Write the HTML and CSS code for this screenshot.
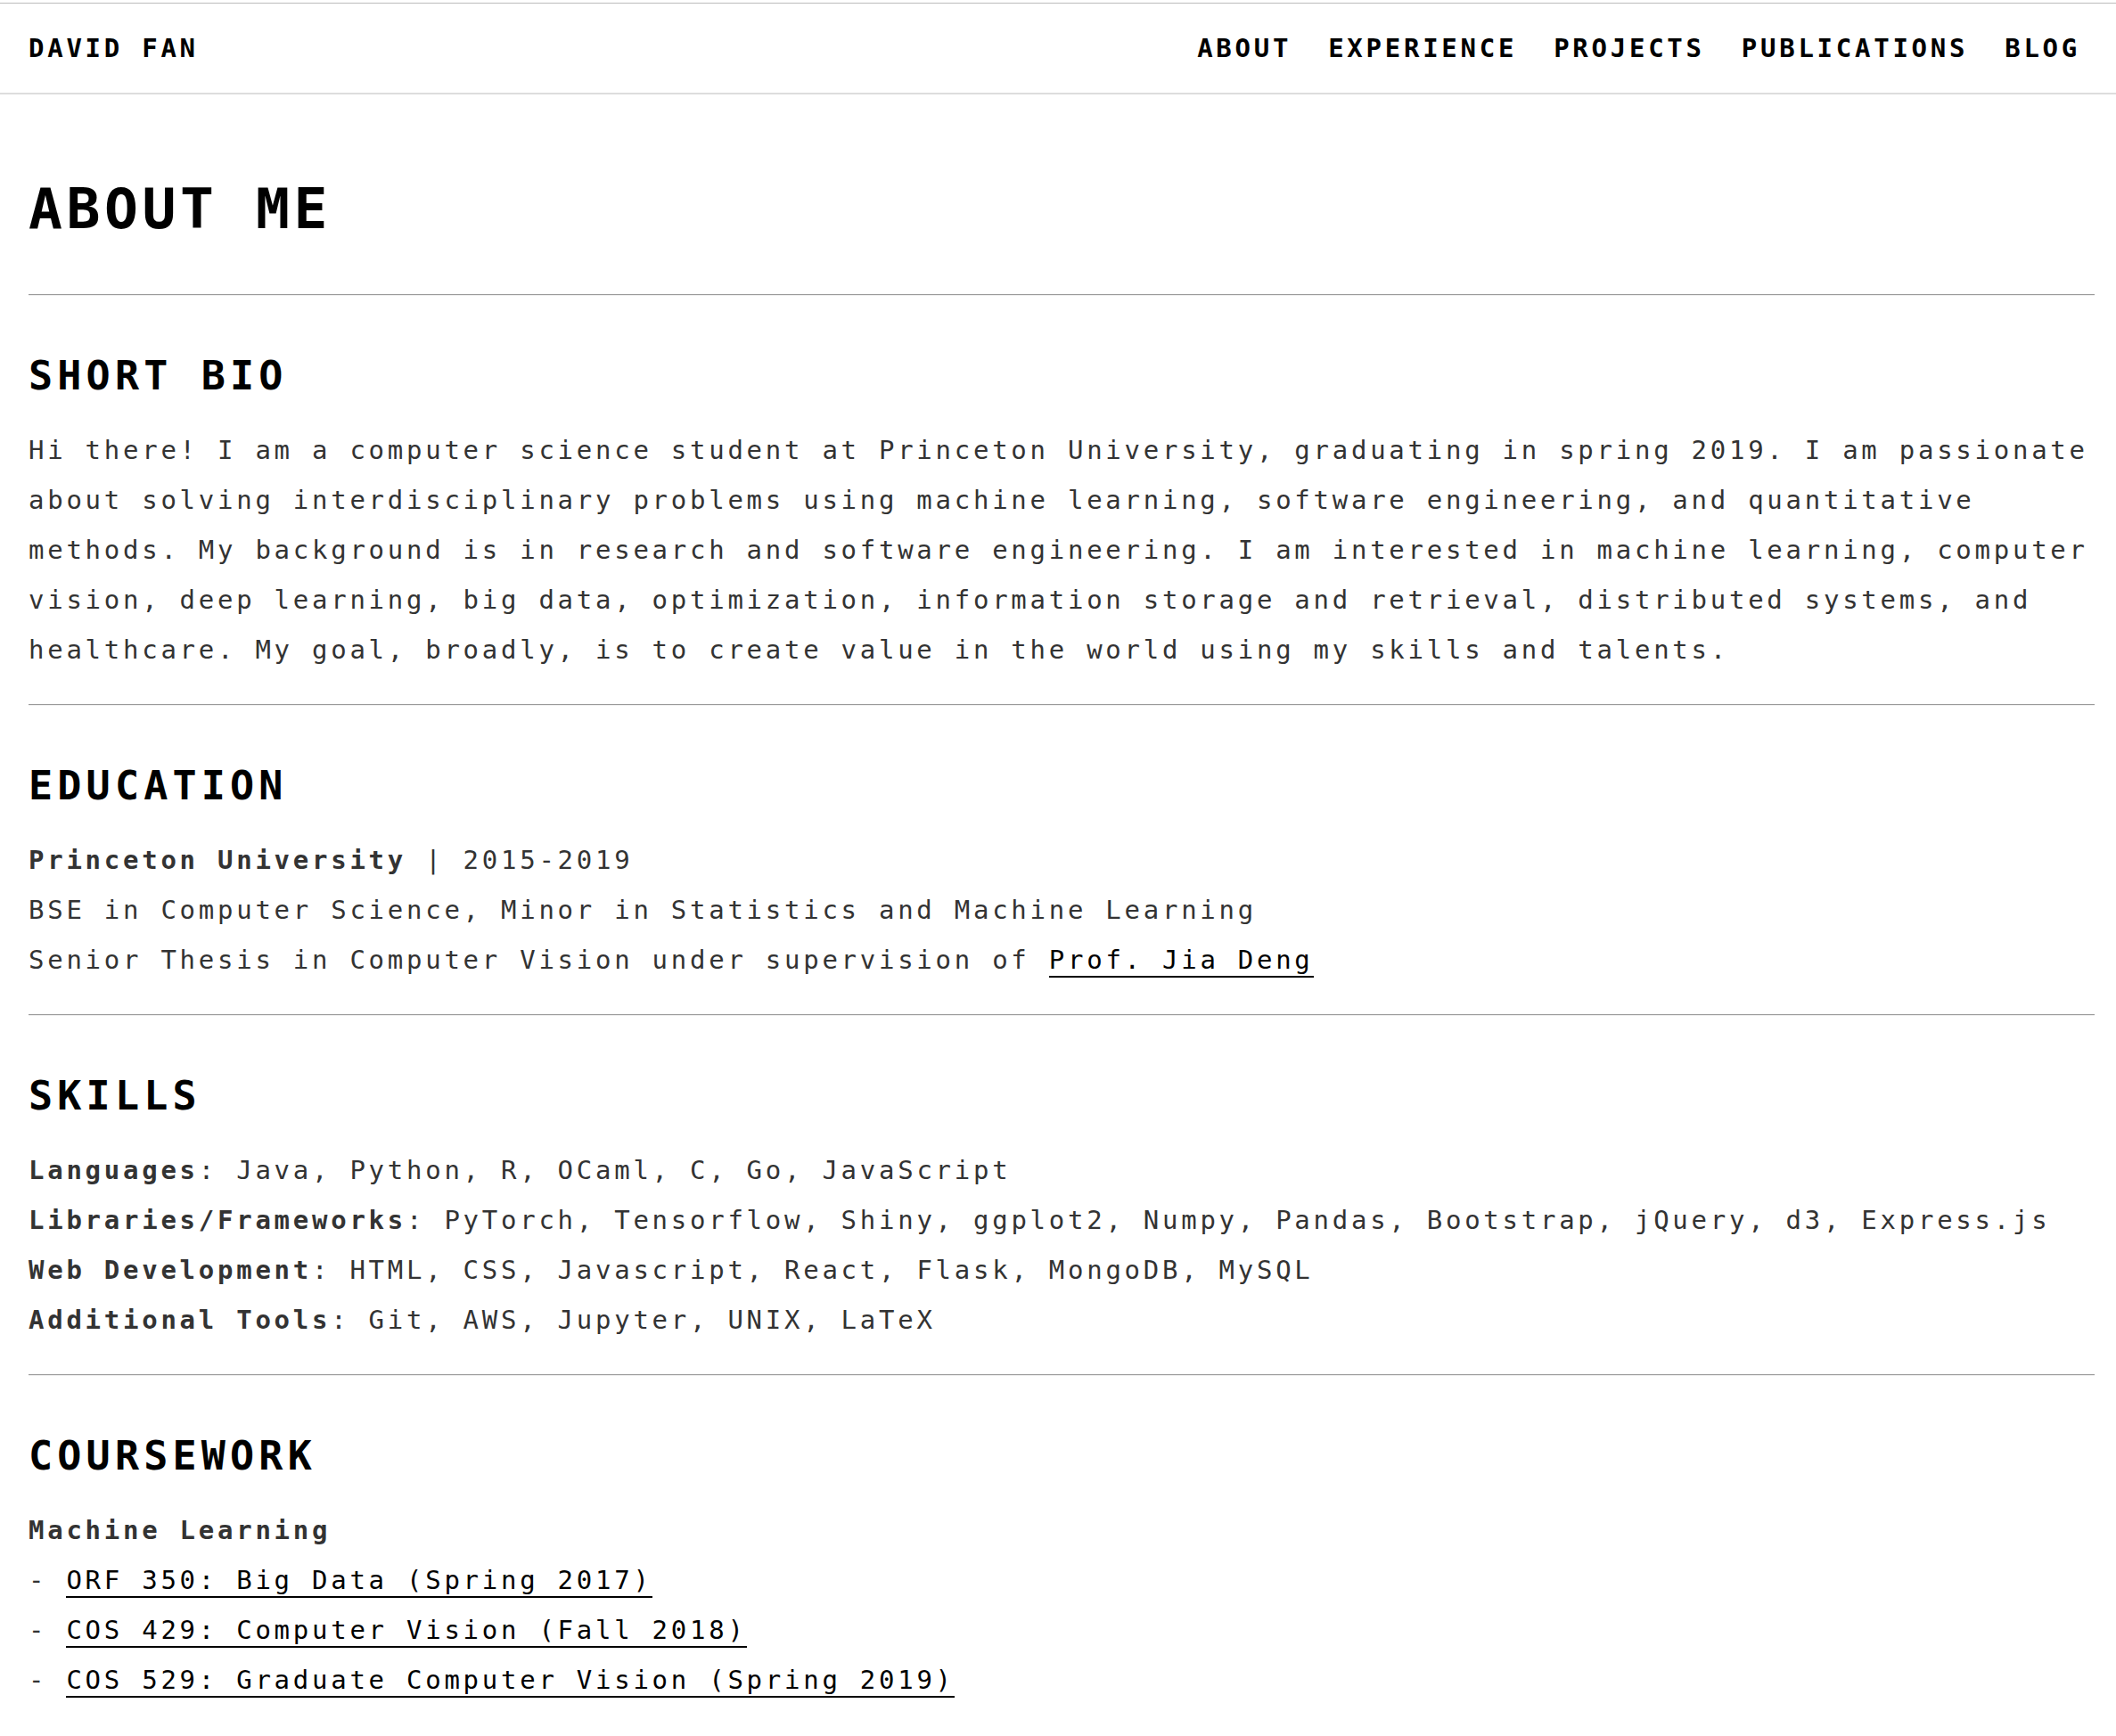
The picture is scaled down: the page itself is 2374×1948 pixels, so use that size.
FILE: index.html
```html
<!DOCTYPE html>
<html lang="en">
<head>
<meta charset="utf-8">
<title>About Me - David Fan</title>
<link rel="stylesheet" href="styles.css">
</head>
<body>
<div class="page">
  <nav class="topnav">
    <a class="brand" href="#">DAVID FAN</a>
    <ul class="navlinks">
      <li><a href="#">ABOUT</a></li>
      <li><a href="#">EXPERIENCE</a></li>
      <li><a href="#">PROJECTS</a></li>
      <li><a href="#">PUBLICATIONS</a></li>
      <li><a href="#">BLOG</a></li>
    </ul>
  </nav>

  <main class="content">
    <h1 class="page-title">ABOUT ME</h1>

    <section class="section">
      <hr class="rule">
      <h2 class="section-title">SHORT BIO</h2>
      <p class="text">Hi there! I am a computer science student at Princeton University, graduating in spring 2019. I am passionate about solving interdisciplinary problems using machine learning, software engineering, and quantitative methods. My background is in research and software engineering. I am interested in machine learning, computer vision, deep learning, big data, optimization, information storage and retrieval, distributed systems, and healthcare. My goal, broadly, is to create value in the world using my skills and talents.</p>
    </section>

    <section class="section">
      <hr class="rule">
      <h2 class="section-title">EDUCATION</h2>
      <div class="text">
        <div class="line"><strong class="label">Princeton University</strong> | 2015-2019</div>
        <div class="line">BSE in Computer Science, Minor in Statistics and Machine Learning</div>
        <div class="line">Senior Thesis in Computer Vision under supervision of <a class="link" href="#">Prof. Jia Deng</a></div>
      </div>
    </section>

    <section class="section">
      <hr class="rule">
      <h2 class="section-title">SKILLS</h2>
      <div class="text">
        <div class="line"><strong class="label">Languages</strong>: Java, Python, R, OCaml, C, Go, JavaScript</div>
        <div class="line"><strong class="label">Libraries/Frameworks</strong>: PyTorch, Tensorflow, Shiny, ggplot2, Numpy, Pandas, Bootstrap, jQuery, d3, Express.js</div>
        <div class="line"><strong class="label">Web Development</strong>: HTML, CSS, Javascript, React, Flask, MongoDB, MySQL</div>
        <div class="line"><strong class="label">Additional Tools</strong>: Git, AWS, Jupyter, UNIX, LaTeX</div>
      </div>
    </section>

    <section class="section">
      <hr class="rule">
      <h2 class="section-title">COURSEWORK</h2>
      <div class="text">
        <div class="line"><strong class="label">Machine Learning</strong></div>
        <div class="line">- <a class="link" href="#">ORF 350: Big Data (Spring 2017)</a></div>
        <div class="line">- <a class="link" href="#">COS 429: Computer Vision (Fall 2018)</a></div>
        <div class="line">- <a class="link" href="#">COS 529: Graduate Computer Vision (Spring 2019)</a></div>
      </div>
    </section>
  </main>
</div>
</body>
</html>
```

FILE: styles.css
```css
html, body {
  margin: 0;
  padding: 0;
  background: #ffffff;
}

body {
  font-family: "DejaVu Sans Mono", "Liberation Mono", monospace;
  color: #333333;
}

.page {
  padding-top: 3px;
}

.topnav {
  display: flex;
  align-items: center;
  justify-content: space-between;
  height: 100px;
  padding: 0 40px 0 32px;
  border-top: 1px solid #bdbdbd;
  border-bottom: 2px solid #dddddd;
}

.brand,
.navlinks a {
  font-size: 29px;
  font-weight: bold;
  letter-spacing: 3.74px;
  color: #000000;
  text-decoration: none;
}

.navlinks {
  display: flex;
  gap: 41px;
  list-style: none;
  margin: 0;
  padding: 0;
}

.content {
  padding: 0 24px 40px 32px;
}

.page-title {
  margin: 91px 0 57px 0;
  font-size: 63px;
  line-height: 76px;
  font-weight: bold;
  letter-spacing: 4.57px;
  color: #000000;
}

.section {
  margin-bottom: 33px;
}

.section:last-child {
  margin-bottom: 0;
}

.rule {
  height: 0;
  margin: 0 0 63px 0;
  border: 0;
  border-top: 1px solid #9a9a9a;
  border-bottom: 1px solid #eeeeee;
}

.section-title {
  margin: 0 0 28px 0;
  font-size: 45px;
  line-height: 54px;
  font-weight: bold;
  letter-spacing: 5.2px;
  color: #000000;
}

.text {
  margin: 0;
  font-size: 29px;
  line-height: 56px;
  letter-spacing: 3.74px;
  color: #333333;
}

.label {
  font-weight: bold;
  color: #333333;
}

.link {
  color: #000000;
  text-decoration: none;
  border-bottom: 2px solid #000000;
  padding-bottom: 1px;
}
```
